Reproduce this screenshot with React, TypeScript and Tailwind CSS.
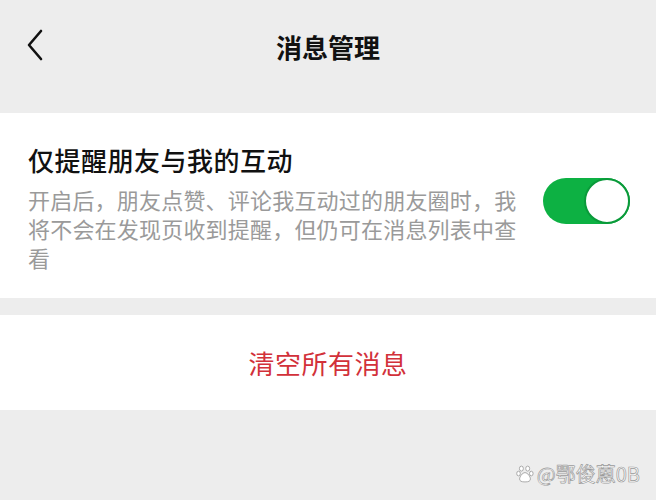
import React, { useState } from 'react';

function BackIcon() {
  return (
    <svg width="18" height="32" viewBox="0 0 18 32" fill="none">
      <path d="M15 2 L3 16 L15 30" stroke="#111" strokeWidth="2.6" strokeLinecap="round" strokeLinejoin="round" />
    </svg>
  );
}

function Paw() {
  return (
    <svg width="18" height="18" viewBox="0 0 20 20" fill="white" stroke="#9a9a9a" strokeWidth="0.9">
      <ellipse cx="6" cy="4" rx="2.2" ry="2.8" />
      <ellipse cx="13" cy="4" rx="2.2" ry="2.8" />
      <ellipse cx="2.8" cy="9.5" rx="2" ry="2.6" />
      <ellipse cx="17" cy="9.5" rx="2" ry="2.6" />
      <path d="M10 8.5 C7 8.5 4 13 4 15.5 C4 18 6 18.8 10 18.8 C14 18.8 16 18 16 15.5 C16 13 13 8.5 10 8.5 Z" />
    </svg>
  );
}

export default function App() {
  const [on, setOn] = useState(true);

  return (
    <div className="relative min-h-[500px] w-full bg-[#ededed] font-['Noto_Sans_CJK_SC','Noto_Sans',sans-serif] overflow-hidden">
      {/* header */}
      <div className="relative flex h-[92px] items-center justify-center">
        <button className="absolute left-[26px] top-[29px]">
          <BackIcon />
        </button>
        <span className="text-[26px] font-bold text-[#111]">消息管理</span>
      </div>

      {/* setting card */}
      <div className="mt-[21px] flex bg-white pl-[28px] pr-[26px] pt-[29px] pb-[26px]">
        <div className="w-[500px] shrink-0">
          <div className="text-[26px] leading-[36px] font-medium tracking-[0.5px] text-[#111]">仅提醒朋友与我的互动</div>
          <p className="mt-[7px] text-[22px] leading-[29px] tracking-[0.2px] text-[#9a9a9a]">
            开启后，朋友点赞、评论我互动过的朋友圈时，我将不会在发现页收到提醒，但仍可在消息列表中查看
          </p>
        </div>
        <div className="ml-auto self-start mt-[36px]">
          <button
            onClick={() => setOn(!on)}
            className={`relative flex h-[46px] w-[87px] items-center rounded-full ${on ? 'bg-[#0db143] justify-end' : 'bg-[#e5e5e5] justify-start'}`}
          >
            <span className="h-[46px] w-[46px] rounded-full border-2 border-[#0a9a3a] bg-white" />
          </button>
        </div>
      </div>

      {/* clear button */}
      <div className="mt-[17px] flex h-[95px] items-center justify-center bg-white">
        <span className="text-[26px] text-[#d2313a] tracking-[0.5px]">清空所有消息</span>
      </div>

      {/* watermark */}
      <div className="absolute bottom-[14px] right-[16px] flex items-center gap-[3px]">
        <Paw />
        <span className="text-[20px] leading-[24px] text-white [-webkit-text-stroke:0.7px_#9a9a9a]">@鄂俊蒽0B</span>
      </div>
    </div>
  );
}
